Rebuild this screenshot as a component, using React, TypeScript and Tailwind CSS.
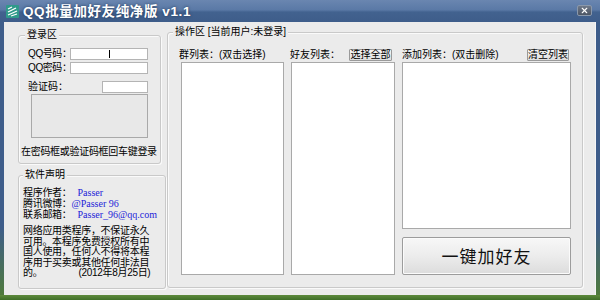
import React from "react";
import { X } from "lucide-react";

const GroupBox = ({
  title,
  className,
  labelClass,
  children,
}: {
  title: string;
  className: string;
  labelClass: string;
  children: React.ReactNode;
}) => (
  <div
    className={
      "border border-[#c9c9c9] rounded-[3px] shadow-[inset_1px_1px_0_#fafafa,1px_1px_0_#fafafa] flex flex-col " +
      className
    }
  >
    <div className={"-mt-[7px] px-[2px] w-fit bg-[#ebebeb] leading-[12px] " + labelClass}>{title}</div>
    {children}
  </div>
);

const SmallButton = ({ label, className }: { label: string; className: string }) => (
  <div
    className={
      "h-[12px] flex items-center justify-center border border-[#9a9a9a] rounded-[1px] bg-[linear-gradient(to_bottom,#f6f6f6,#dedede)] leading-[10px] " +
      className
    }
  >
    {label}
  </div>
);

const TitleBar = () => (
  <div className="h-[22px] flex items-start bg-[linear-gradient(to_bottom,#6a86b0_0%,#5a79a6_45%,#42628f_55%,#3e5d8a_100%)]">
    <svg width="13" height="13" viewBox="0 0 13 13" className="ml-[6px] mt-[5px] shrink-0">
      <rect x="0" y="0" width="13" height="13" rx="1" fill="#2f9a8a" />
      <path d="M2 4 L6 2 M2 7 L10 3 M2 10 L11 6 M5 11 L11 9" stroke="#ffffff" strokeWidth="1.3" fill="none" />
    </svg>
    <div className="ml-[4px] mt-[4px] text-[13.5px] leading-[15px] tracking-[0.6px] font-bold text-white [text-shadow:0_0_3px_rgba(20,40,70,0.8)]">
      QQ批量加好友纯净版 v1.1
    </div>
    <div className="ml-auto mr-[8px] mt-[5px] w-[15px] h-[11px] flex items-center justify-center border border-[#8a98ab] rounded-[2px] bg-[linear-gradient(to_bottom,#6e7888,#4c5564)]">
      <X size={9} strokeWidth={3} color="#ffffff" />
    </div>
  </div>
);

export default function App() {
  return (
    <div className="w-[600px] h-[300px] flex flex-col overflow-hidden bg-[#3d5c8a] text-[10px] text-black font-['Liberation_Sans','Noto_Sans_CJK_SC',sans-serif]">
      <TitleBar />
      <div className="flex h-[273px]">
        <div className="w-[4px] bg-[linear-gradient(to_bottom,#3e5d8a_0%,#3e5d8a_75%,#4f7a3c_100%)]" />
        <div className="w-[592px] bg-[#ebebeb] flex items-start pl-[14px] border-r border-[#f6f6f6]">
          {/* left column */}
          <div className="w-[148px] mt-[13px] flex flex-col">
            <GroupBox title="登录区" className="w-[143px] h-[129px]" labelClass="ml-[6px]">
              <div className="mt-[7px] pl-[9px] flex items-center h-[12px]">
                <div className="w-[42px] shrink-0 leading-[12px] whitespace-nowrap tracking-[-0.4px]">QQ号码：</div>
                <div className="w-[78px] shrink-0 h-[12px] bg-white border border-[#b4b4b4] flex items-center pl-[38px]">
                  <div className="w-px h-[8px] bg-black" />
                </div>
              </div>
              <div className="mt-[2px] pl-[9px] flex items-center h-[12px]">
                <div className="w-[42px] shrink-0 leading-[12px] whitespace-nowrap tracking-[-0.4px]">QQ密码：</div>
                <div className="w-[78px] shrink-0 h-[12px] bg-white border border-[#b4b4b4]" />
              </div>
              <div className="mt-[7px] pl-[9px] pr-[12px] flex items-center h-[12px]">
                <div className="leading-[12px] whitespace-nowrap">验证码：</div>
                <div className="ml-auto w-[46px] shrink-0 h-[12px] bg-white border border-[#b4b4b4]" />
              </div>
              <div className="mt-[1px] ml-[12px] w-[117px] h-[44px] border border-[#a9a9a9] bg-[#e8e8e8]" />
              <div className="mt-[8px] pl-[2px] leading-[12px] tracking-[-0.3px] whitespace-nowrap">
                在密码框或验证码框回车键登录
              </div>
            </GroupBox>
            <GroupBox title="软件声明" className="w-[148px] h-[114px] mt-[11px]" labelClass="ml-[4px]">
              <div className="mt-[6px] pl-[4px] leading-[11px] tracking-[-0.3px] whitespace-nowrap">
                <div>
                  程序作者：
                  <span className="ml-[6px] text-[#2323d8] font-['Liberation_Serif',serif] tracking-normal">Passer</span>
                </div>
                <div>
                  腾讯微博：
                  <span className="text-[#2323d8] font-['Liberation_Serif',serif] tracking-normal">@Passer 96</span>
                </div>
                <div>
                  联系邮箱：
                  <span className="ml-[6px] text-[#2323d8] font-['Liberation_Serif',serif] tracking-normal">Passer_96@qq.com</span>
                </div>
              </div>
              <div className="mt-[6px] pl-[4px] leading-[10.5px] tracking-[-0.3px] whitespace-nowrap">
                <div>网络应用类程序，不保证永久</div>
                <div>可用。本程序免费授权所有中</div>
                <div>国人使用，任何人不得将本程</div>
                <div>序用于买卖或其他任何非法目</div>
                <div>
                  的。<span className="ml-[36px]">(2012年8月25日)</span>
                </div>
              </div>
            </GroupBox>
          </div>

          {/* operation area */}
          <GroupBox title="操作区 [当前用户:未登录]" className="w-[416px] h-[256px] mt-[10px] ml-px" labelClass="ml-[5px]">
            <div className="mt-[11px] pl-[13px] flex gap-[7px]">
              <div className="w-[103px] flex flex-col">
                <div className="h-[13px] -ml-[2px] leading-[12px] whitespace-nowrap">群列表：(双击选择)</div>
                <div className="h-[213px] bg-white border border-[#a9a9a9]" />
              </div>
              <div className="w-[104px] flex flex-col">
                <div className="h-[13px] flex items-start">
                  <div className="-ml-px leading-[12px] whitespace-nowrap">好友列表：</div>
                  <SmallButton label="选择全部" className="ml-auto mr-[3px] w-[43px]" />
                </div>
                <div className="h-[213px] bg-white border border-[#a9a9a9]" />
              </div>
              <div className="w-[169px] flex flex-col">
                <div className="h-[13px] flex items-start">
                  <div className="leading-[12px] whitespace-nowrap">添加列表：(双击删除)</div>
                  <SmallButton label="清空列表" className="ml-auto mr-[2px] w-[42px]" />
                </div>
                <div className="h-[167px] bg-white border border-[#a9a9a9]" />
                <div className="mt-[8px] h-[38px] flex items-center justify-center border border-[#9c9c9c] rounded-[2px] bg-[linear-gradient(to_bottom,#f7f7f7_0%,#ececec_50%,#dcdcdc_100%)] shadow-[inset_0_0_0_1px_#fbfbfb] text-[17px] leading-[20px] text-[#111] tracking-[1px] font-['Noto_Sans_CJK_SC',sans-serif]">
                  一键加好友
                </div>
              </div>
            </div>
          </GroupBox>
        </div>
        <div className="w-[4px] bg-[linear-gradient(to_bottom,#3e5d8a_0%,#3e5d8a_75%,#4f7a3c_100%)]" />
      </div>
      <div className="h-[5px] bg-[linear-gradient(to_bottom,#5d8a3c,#3f6e28)]" />
    </div>
  );
}
